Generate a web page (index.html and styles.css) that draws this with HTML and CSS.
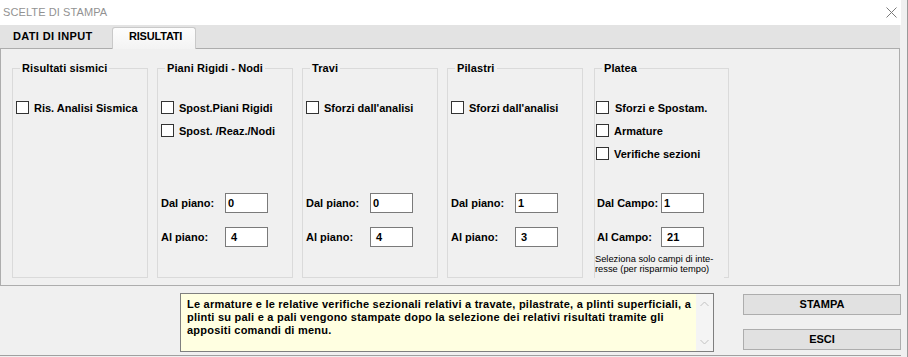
FILE: index.html
```html
<!DOCTYPE html>
<html lang="it">
<head>
<meta charset="utf-8">
<title>Scelte di stampa</title>
<link rel="stylesheet" href="styles.css">
</head>
<body>
<div class="window">
  <div class="main">
    <div class="titlebar">
      <span class="title">SCELTE DI STAMPA</span>
      <svg class="close" width="11" height="11" viewBox="0 0 11 11"><path d="M0.5 0.5 L10.5 10.5 M10.5 0.5 L0.5 10.5" stroke="#7a7a7a" stroke-width="1" fill="none"/></svg>
    </div>
    <div class="tabs">
      <div class="tab">DATI DI INPUT</div>
      <div class="tab active">RISULTATI</div>
    </div>
    <div class="panel">
      <div class="group">
        <div class="gtitle">Risultati sismici</div>
        <div class="checks">
          <div class="chk"><span class="box"></span><span>Ris. Analisi Sismica</span></div>
        </div>
      </div>
      <div class="group">
        <div class="gtitle">Piani Rigidi - Nodi</div>
        <div class="checks">
          <div class="chk"><span class="box"></span><span>Spost.Piani Rigidi</span></div>
          <div class="chk"><span class="box"></span><span>Spost. /Reaz./Nodi</span></div>
        </div>
        <div class="fields">
          <span class="flabel">Dal piano:</span><span class="input">0</span>
          <span class="flabel">Al piano:</span><span class="input"> 4</span>
        </div>
      </div>
      <div class="group">
        <div class="gtitle">Travi</div>
        <div class="checks">
          <div class="chk"><span class="box"></span><span>Sforzi dall'analisi</span></div>
        </div>
        <div class="fields">
          <span class="flabel">Dal piano:</span><span class="input">0</span>
          <span class="flabel">Al piano:</span><span class="input"> 4</span>
        </div>
      </div>
      <div class="group">
        <div class="gtitle">Pilastri</div>
        <div class="checks">
          <div class="chk"><span class="box"></span><span>Sforzi dall'analisi</span></div>
        </div>
        <div class="fields">
          <span class="flabel">Dal piano:</span><span class="input">1</span>
          <span class="flabel">Al piano:</span><span class="input"> 3</span>
        </div>
      </div>
      <div class="group platea">
        <div class="gtitle">Platea</div>
        <div class="checks">
          <div class="chk"><span class="box"></span><span class="sforzi">Sforzi e Spostam.</span></div>
          <div class="chk"><span class="box"></span><span>Armature</span></div>
          <div class="chk"><span class="box"></span><span>Verifiche sezioni</span></div>
        </div>
        <div class="fields">
          <span class="flabel">Dal Campo:</span><span class="input">1</span>
          <span class="flabel">Al Campo:</span><span class="input"> 21</span>
        </div>
        <div class="hint">Seleziona solo campi di inte-<br>resse (per risparmio tempo)</div>
      </div>
    </div>
    <div class="bottom">
      <div class="note">
        <div class="note-text">Le armature e le relative verifiche sezionali relativi a travate, pilastrate, a plinti superficiali, a<br>plinti su pali e a pali vengono stampate dopo la selezione dei relativi risultati tramite gli<br>appositi comandi di menu.</div>
        <div class="scroll">
          <svg width="9" height="6" viewBox="0 0 9 6"><path d="M0.5 5 L4.5 1 L8.5 5" stroke="#c2c2c2" stroke-width="1" fill="none"/></svg>
          <svg width="9" height="6" viewBox="0 0 9 6"><path d="M0.5 1 L4.5 5 L8.5 1" stroke="#c2c2c2" stroke-width="1" fill="none"/></svg>
        </div>
      </div>
      <div class="buttons">
        <div class="btn">STAMPA</div>
        <div class="btn">ESCI</div>
      </div>
    </div>
  </div>
  <div class="edge"></div>
</div>
</body>
</html>
```
FILE: styles.css
```css
* { box-sizing: border-box; }
html, body { margin: 0; padding: 0; }
body {
  background: #f0f0f0;
  font-family: "Liberation Sans", Arial, sans-serif;
  font-size: 11px;
  color: #000;
}
.window {
  display: flex;
  width: 908px;
  height: 357px;
  overflow: hidden;
}
.main {
  width: 901px;
  display: flex;
  flex-direction: column;
}
.edge {
  width: 7px;
  background: #f0f0f0;
  border-right: 1px solid #9a9a9a;
}
.titlebar {
  height: 25px;
  background: #fff;
  display: flex;
  align-items: center;
  justify-content: space-between;
  padding: 0 3px 1px 3px;
}
.title {
  color: #929292;
  font-size: 11px;
  letter-spacing: 0.1px;
}
.close { margin-right: 1px; }
.tabs {
  height: 23px;
  background: #e3e3e3;
  display: flex;
  align-items: flex-end;
  width: 900px;
}
.tab {
  font-weight: bold;
  font-size: 11px;
}
.tab:first-child {
  width: 112px;
  height: 22px;
  line-height: 20px;
  padding-left: 13px;
  letter-spacing: 0.35px;
}
.tab.active {
  position: relative;
  z-index: 1;
  width: 84px;
  height: 22px;
  margin-bottom: -1px;
  line-height: 17px;
  padding-left: 16px;
  border: 1px solid #c9c9c9;
  border-bottom: none;
  border-radius: 3px 3px 0 0;
  background: linear-gradient(#fdfdfd, #f3f3f3);
  letter-spacing: -0.2px;
}
.panel {
  width: 900px;
  height: 238px;
  border: 1px solid #adadad;
  display: flex;
  gap: 9px;
  padding: 19px 0 7px 11px;
}
.group {
  position: relative;
  width: 136px;
  height: 210px;
  border: 1px solid #dadada;
  padding: 32px 0 0 3px;
}
.group.platea { width: 135px; margin-left: 2px; padding-left: 1px; }
.gtitle {
  position: absolute;
  top: -7px;
  left: 7px;
  padding: 0 2px;
  background: #f0f0f0;
  font-weight: bold;
  line-height: 13px;
  letter-spacing: 0.1px;
}
.checks {
  height: 92px;
  display: flex;
  flex-direction: column;
  gap: 10px;
}
.chk {
  display: flex;
  align-items: center;
  gap: 5px;
  height: 13px;
  font-weight: bold;
  white-space: nowrap;
}
.box {
  width: 13px;
  height: 13px;
  border: 1px solid #333;
  background: #fff;
  flex: none;
}
.sforzi { margin-left: 1px; }
.fields {
  display: grid;
  grid-template-columns: 64px 43px;
  grid-auto-rows: 20px;
  row-gap: 14px;
  align-items: center;
}
.platea .fields { padding-left: 1px; }
.flabel {
  font-weight: bold;
  white-space: nowrap;
}
.input {
  height: 20px;
  border: 1px solid #7a7a7a;
  background: #fff;
  font-weight: bold;
  line-height: 18px;
  padding-left: 2px;
  white-space: pre;
}
.hint {
  position: absolute;
  top: 184px;
  left: 0;
  width: 129px;
  height: 25px;
  background: #f0f0f0;
  font-size: 9.3px;
  line-height: 10px;
  padding-top: 1px;
  white-space: nowrap;
}
.bottom {
  height: 70px;
  display: flex;
  border-bottom: 1px solid #a0a0a0;
}
.note {
  margin: 7px 0 0 180px;
  width: 534px;
  height: 59px;
  border: 1px solid #7f7f7f;
  background: #ffffe1;
  display: flex;
}
.note-text {
  flex: 1;
  padding: 4px 0 0 6px;
  font-weight: bold;
  line-height: 13px;
  letter-spacing: 0.23px;
  white-space: nowrap;
  overflow: hidden;
}
.scroll {
  width: 17px;
  background: #f4f4f4;
  display: flex;
  flex-direction: column;
  justify-content: space-between;
  align-items: center;
  padding: 7px 0 6px;
}
.buttons {
  margin: 8px 0 0 29px;
  width: 158px;
  display: flex;
  flex-direction: column;
  gap: 14px;
}
.btn {
  height: 21px;
  border: 1px solid #adadad;
  background: #e1e1e1;
  text-align: center;
  font-weight: bold;
  line-height: 19px;
}
```
